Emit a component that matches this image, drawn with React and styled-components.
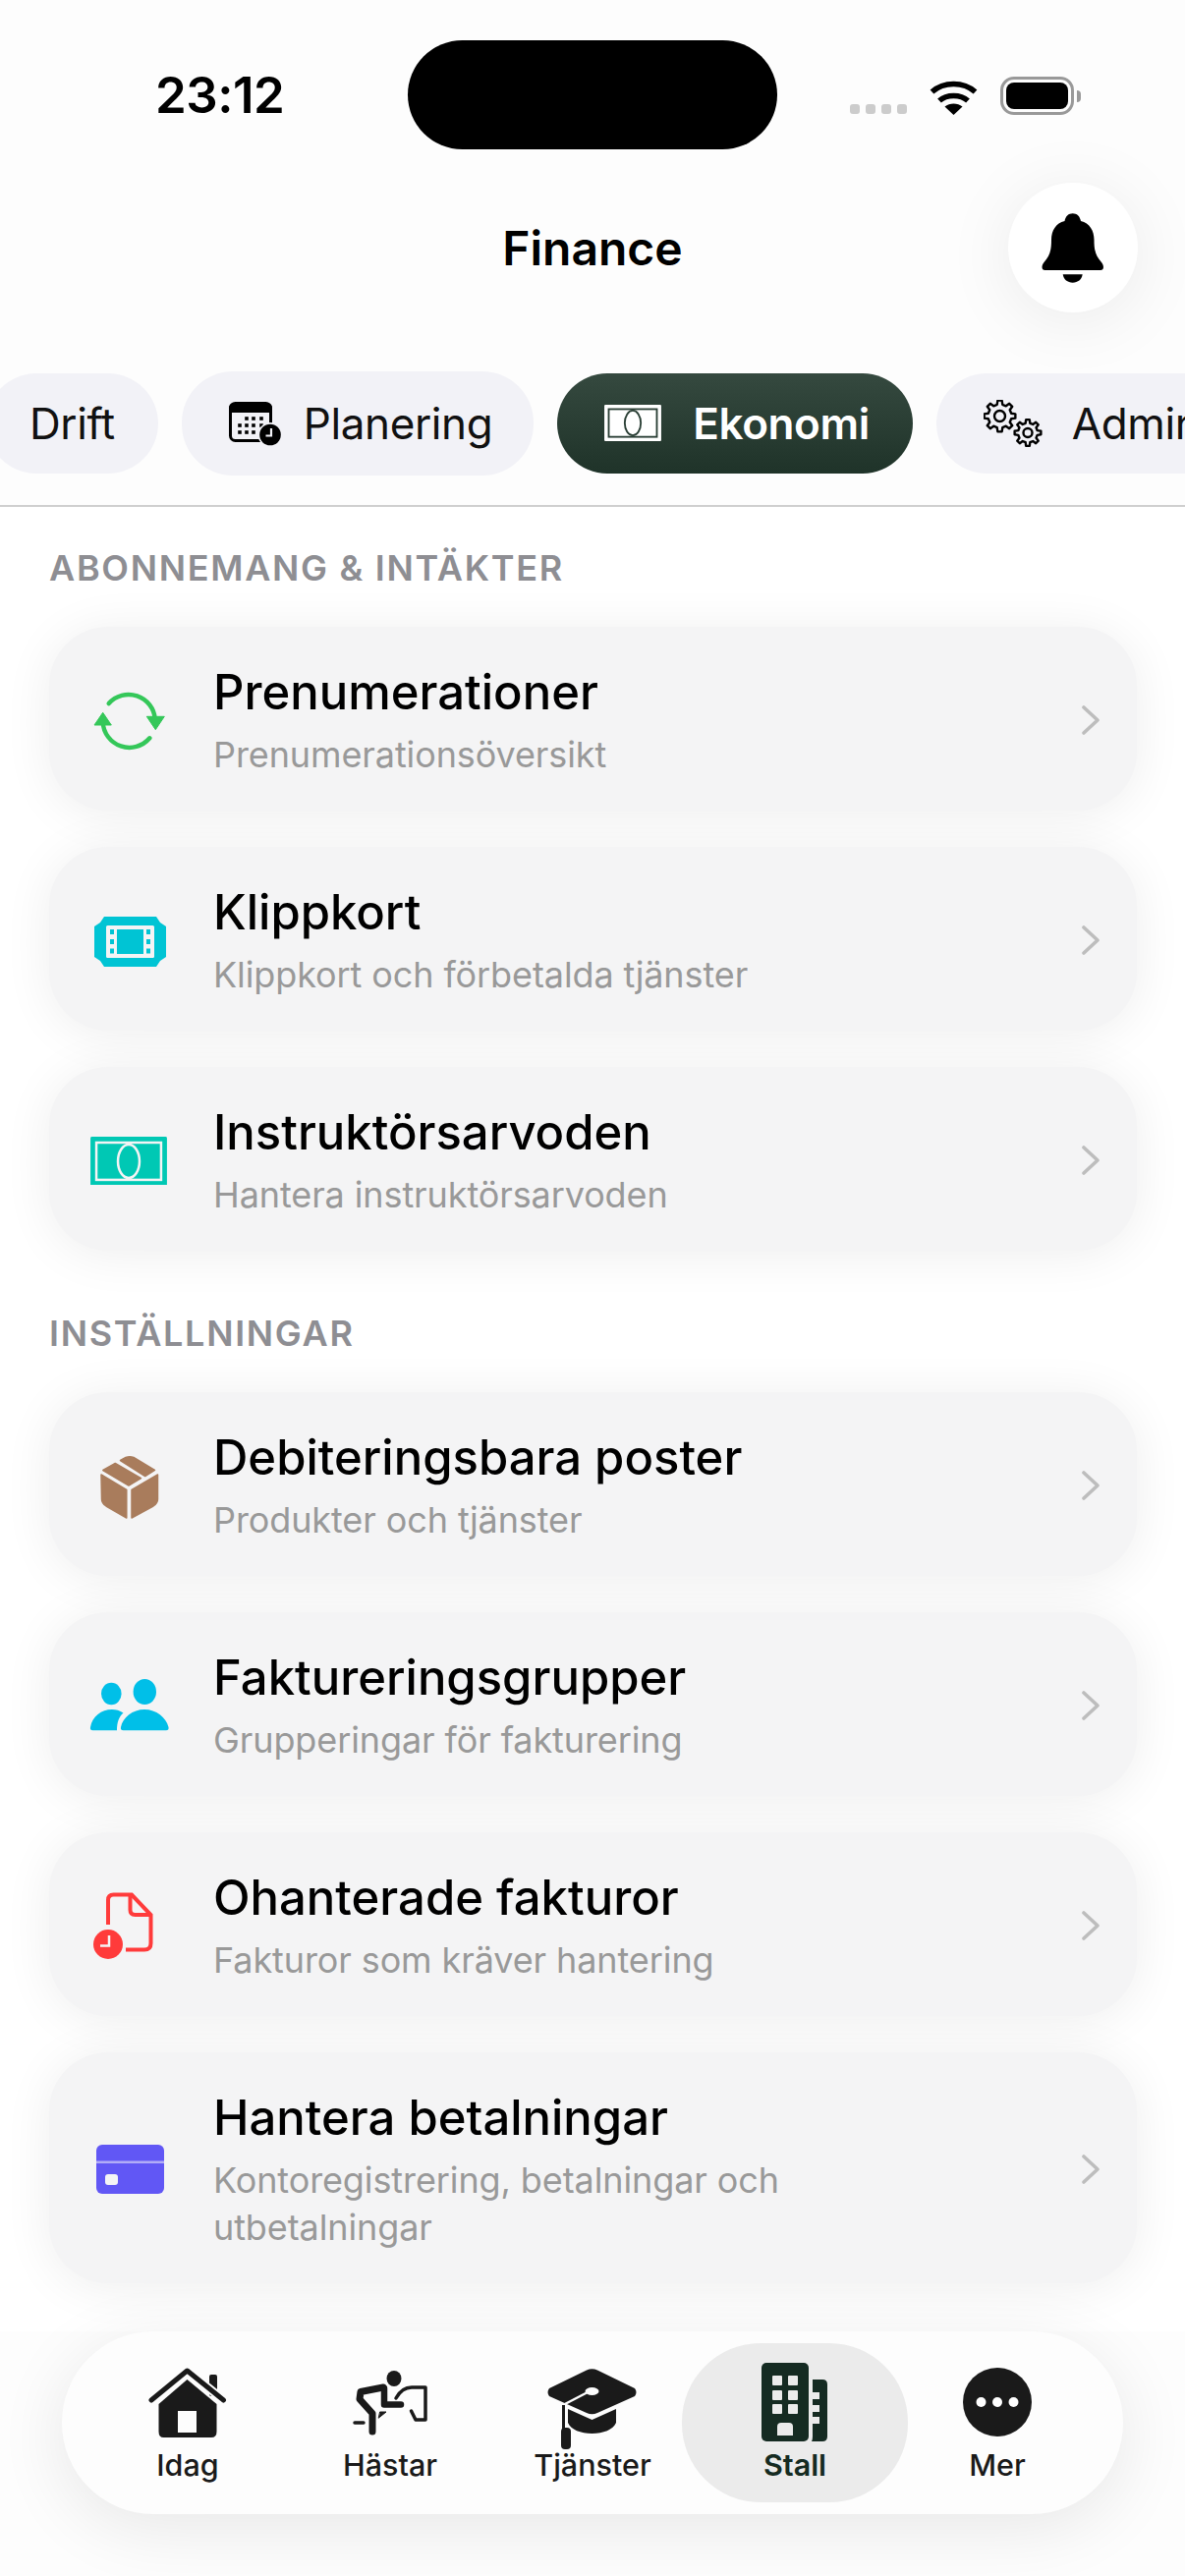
import styled, { createGlobalStyle } from 'styled-components'

const GlobalStyle = createGlobalStyle`
  html, body {
    margin: 0;
    padding: 0;
    background: #fff;
    font-family: Inter, "Noto Sans", sans-serif;
  }
`

const sections = [
  {
    title: 'ABONNEMANG & INTÄKTER',
    rows: [
      { title: 'Prenumerationer', sub: 'Prenumerationsöversikt', icon: <SyncIcon /> },
      { title: 'Klippkort', sub: 'Klippkort och förbetalda tjänster', icon: <TicketIcon /> },
      { title: 'Instruktörsarvoden', sub: 'Hantera instruktörsarvoden', icon: <MoneyIcon fill="#00c8b4" line="#f4f4f5" width={78} /> },
    ],
  },
  {
    title: 'INSTÄLLNINGAR',
    rows: [
      { title: 'Debiteringsbara poster', sub: 'Produkter och tjänster', icon: <BoxIcon /> },
      { title: 'Faktureringsgrupper', sub: 'Grupperingar för fakturering', icon: <PeopleIcon /> },
      { title: 'Ohanterade fakturor', sub: 'Fakturor som kräver hantering', icon: <DocClockIcon /> },
      { title: 'Hantera betalningar', sub: 'Kontoregistrering, betalningar och utbetalningar', icon: <CardIcon /> },
    ],
  },
]

const navItems = [
  { label: 'Idag', icon: <HomeIcon /> },
  { label: 'Hästar', icon: <RiderIcon /> },
  { label: 'Tjänster', icon: <CapIcon /> },
  { label: 'Stall', icon: <BuildingIcon />, active: true },
  { label: 'Mer', icon: <MoreIcon /> },
]

export default function App() {
  return (
    <Page>
      <GlobalStyle />

      <StatusBar>
        <Time>23:12</Time>
        <Island />
        <StatusIcons>
          <SignalDots>
            <i /><i /><i /><i />
          </SignalDots>
          <WifiIcon />
          <Battery><BatteryFill /></Battery>
          <BatteryNub />
        </StatusIcons>
      </StatusBar>

      <TitleRow>
        <Title>Finance</Title>
        <BellButton><BellIcon /></BellButton>
      </TitleRow>

      <Tabs>
        <Tab $plain>Drift</Tab>
        <Tab $tall $gap={23}><CalendarIcon />Planering</Tab>
        <Tab $active $gap={32}><MoneyIcon fill="#fff" line="#2a3f35" width={58} />Ekonomi</Tab>
        <Tab $gap={30}><GearsIcon />Administration</Tab>
      </Tabs>

      <Content>
        {sections.map(section => (
          <section key={section.title}>
            <SectionTitle>{section.title}</SectionTitle>
            <CardList>
              {section.rows.map(row => (
                <Card key={row.title}>
                  <CardIconSlot>{row.icon}</CardIconSlot>
                  <CardText>
                    <CardTitle>{row.title}</CardTitle>
                    <CardSub>{row.sub}</CardSub>
                  </CardText>
                  <Chevron />
                </Card>
              ))}
            </CardList>
          </section>
        ))}
      </Content>

      <Nav>
        {navItems.map(item => (
          <NavItem key={item.label} $active={item.active}>
            <NavIconSlot>{item.icon}</NavIconSlot>
            <NavLabel $active={item.active}>{item.label}</NavLabel>
          </NavItem>
        ))}
      </Nav>
    </Page>
  )
}

function WifiIcon() {
  return (
    <svg width="51" height="38" viewBox="0 0 51 38" fill="none" stroke="#000" strokeWidth="5.6">
      <path d="M3.5 14.5C15.5 3.8 35.5 3.8 47.5 14.5" />
      <path d="M11 23.5C18.5 16.8 32.5 16.8 40 23.5" />
      <path d="M25.5 38L16.5 29.5C21.5 25.5 29.5 25.5 34.5 29.5Z" fill="#000" stroke="none" />
    </svg>
  )
}

function BellIcon() {
  return (
    <svg width="64" height="71" viewBox="0 0 64 71" fill="#000">
      <path d="M31.7.3C36 .3 39 3 40 8 49 10 53.5 18 53.5 27 53.5 38 55 43 61 50 64 54 63.5 58 60 58H3.5C0 58-.5 54 2.5 50 8.5 43 10 38 10 27 10 18 14.5 10 23.5 8 24.5 3 27.5.3 31.7.3Z" />
      <path d="M21.7 62.3H41.7C41 67.5 37 70.7 31.7 70.7 26.4 70.7 22.4 67.5 21.7 62.3Z" />
    </svg>
  )
}

function CalendarIcon() {
  const dots = [[18, 17], [25, 17], [33, 17], [11, 24], [18, 24], [25, 24], [33, 24], [11, 31], [18, 31], [25, 31]]
  return (
    <svg width="53" height="45" viewBox="0 0 53 45">
      <rect x="1.5" y="1.5" width="41" height="38" rx="5" fill="#f2f2f7" stroke="#000" strokeWidth="3" />
      <path d="M0 6a5 5 0 0 1 5-5h34a5 5 0 0 1 5 5v5H0Z" fill="#000" />
      {dots.map(([x, y]) => <rect key={`${x}-${y}`} x={x - 1.8} y={y - 1.8} width="3.6" height="3.6" fill="#000" />)}
      <circle cx="42" cy="33.5" r="12.5" fill="#f2f2f7" />
      <circle cx="42" cy="33.5" r="10.8" fill="#000" />
      <path d="M43 27v7.5h-5.5" fill="none" stroke="#f2f2f7" strokeWidth="2.2" />
    </svg>
  )
}

function MoneyIcon({ fill, line, width }) {
  return (
    <svg width={width} height={width * 0.64} viewBox="0 0 78 50">
      <rect x="0" y="0" width="78" height="50" rx="1.5" fill={fill} />
      <rect x="6" y="6" width="66" height="38" fill="none" stroke={line} strokeWidth="2.5" />
      <ellipse cx="39" cy="25" rx="11" ry="17" fill="none" stroke={line} strokeWidth="2.5" />
    </svg>
  )
}

function gearPath(cx, cy, inner, outer, teeth) {
  const pts = []
  for (let i = 0; i < teeth; i++) {
    const step = (Math.PI * 2) / teeth
    const a = i * step
    const offs = [[-0.3, inner], [-0.17, outer], [0.17, outer], [0.3, inner]]
    offs.forEach(([k, r]) => {
      pts.push(`${(cx + Math.cos(a + k * step) * r).toFixed(2)} ${(cy + Math.sin(a + k * step) * r).toFixed(2)}`)
    })
  }
  return `M${pts.join('L')}Z`
}

function GearsIcon() {
  return (
    <svg width="60" height="48" viewBox="0 0 60 48" fill="none" stroke="#000" strokeWidth="2.4" strokeLinejoin="round">
      <path d={gearPath(16.5, 16.5, 12, 16, 8)} />
      <circle cx="16.5" cy="16.5" r="5.5" />
      <path d={gearPath(45, 33.5, 10, 13.5, 8)} />
      <circle cx="45" cy="33.5" r="4.5" />
    </svg>
  )
}

function SyncIcon() {
  return (
    <svg width="90" height="90" viewBox="0 0 90 90" fill="#34c759">
      <path d="M24.7 27A27 27 0 0 1 71.8 43" fill="none" stroke="#34c759" strokeWidth="4.5" strokeLinecap="round" />
      <path d="M66.3 62.3A27 27 0 0 1 18.7 46" fill="none" stroke="#34c759" strokeWidth="4.5" strokeLinecap="round" />
      <path d="M63.3 40.3H81.3L72.3 53.7Z" stroke="#34c759" strokeWidth="1" strokeLinejoin="round" />
      <path d="M10 49H27.3L18.7 36.3Z" stroke="#34c759" strokeWidth="1" strokeLinejoin="round" />
    </svg>
  )
}

function TicketIcon() {
  const holes = [33, 43, 52.5]
  return (
    <svg width="90" height="90" viewBox="0 0 90 90">
      <path d="M20 20H73L77 26 83 30V61L77 65 73 71H20L16 65 10 61V30L16 26Z" fill="#00c4d4" />
      <rect x="22" y="29" width="49" height="33" rx="1.5" fill="#f4f4f5" />
      <rect x="33" y="33" width="27" height="25" fill="#00c4d4" />
      {holes.map(y => <rect key={y} x="26" y={y} width="4" height="5" fill="#00c4d4" />)}
      {holes.map(y => <rect key={y} x="63" y={y} width="4" height="5" fill="#00c4d4" />)}
    </svg>
  )
}

function BoxIcon() {
  return (
    <svg width="90" height="90" viewBox="0 0 90 90" fill="#a97c5c" stroke="#a97c5c" strokeWidth="1.5" strokeLinejoin="round">
      <path d="M17 33L42.8 48.5V77L22 65Q17.5 62 17.5 58Z" />
      <path d="M48 48.5L74.5 33V58Q74.5 62 70 65L48 77Z" />
      <path d="M18.8 28.5L31.3 21.5 57.5 36.7 45 44Z" />
      <path d="M36.5 18.5L42 15.5Q46 13.8 50 15.5L71.5 28.3 61.7 34.5Z" />
    </svg>
  )
}

function PeopleIcon() {
  return (
    <svg width="90" height="90" viewBox="0 0 90 90" fill="#00bfe8">
      <ellipse cx="27.3" cy="32" rx="10.3" ry="11.3" />
      <ellipse cx="61.3" cy="30" rx="11.7" ry="13" />
      <path d="M8.5 69.3C6.5 69.3 5.5 68 6 66 8 55 17 48 28 48 32 48 36 49 39.5 51.5 35 55.5 33 61 33 69.3Z" />
      <path d="M39.5 69.3C37.5 69.3 36.5 68 37 66 39 56 49 48 61 48 73 48 83 56 85.5 66 86 68 85 69.3 83 69.3Z" />
    </svg>
  )
}

function DocClockIcon() {
  return (
    <svg width="90" height="90" viewBox="0 0 90 90">
      <path d="M24 43V18Q24 12.5 29.5 12.5H48L67.5 33V62Q67.5 68.5 61 68.5H42" fill="none" stroke="#ff3b3b" strokeWidth="4" />
      <path d="M46.5 12.5V28Q46.5 33 51.5 33H67.5" fill="none" stroke="#ff3b3b" strokeWidth="4" />
      <circle cx="24" cy="63" r="15" fill="#ff3b3b" />
      <path d="M25 54V64.5H16" fill="none" stroke="#f4f4f5" strokeWidth="2.5" />
    </svg>
  )
}

function CardIcon() {
  return (
    <svg width="90" height="90" viewBox="0 0 90 90">
      <rect x="12" y="19" width="69" height="50" rx="6" fill="#6157f5" />
      <rect x="12" y="35.5" width="69" height="2.5" fill="#b1acf7" />
      <rect x="21" y="49" width="13" height="11" rx="3" fill="#f4f4f5" />
    </svg>
  )
}

function HomeIcon() {
  return (
    <svg width="80" height="90" viewBox="0 -5 80 90" fill="#1a1a1a">
      <rect x="62" y="7" width="8" height="22" rx="2" />
      <path d="M10.5 37L39.5 12 69.5 37V65Q69.5 71 64 71H15.5Q10.5 71 10.5 65Z" />
      <path d="M3 33L39.5 3 76.5 33" fill="none" stroke="#fdfdfd" strokeWidth="9" strokeLinecap="round" strokeLinejoin="round" />
      <path d="M3 33L39.5 3 76.5 33" fill="none" stroke="#1a1a1a" strokeWidth="5" strokeLinecap="round" strokeLinejoin="round" />
      <rect x="30" y="44" width="19" height="22" fill="#fdfdfd" />
    </svg>
  )
}

function RiderIcon() {
  return (
    <svg width="80" height="90" viewBox="0 -5 80 90" fill="none" stroke="#1a1a1a" strokeLinecap="round" strokeLinejoin="round">
      <ellipse cx="44" cy="11" rx="7.5" ry="8" fill="#1a1a1a" stroke="none" />
      <path d="M33 20L10 24.5 9 32 22 46.5V65" strokeWidth="7" />
      <path d="M34 21V37.5H51" strokeWidth="6.5" />
      <path d="M46 31Q52 20 62 20H76V53H66L61.5 44" strokeWidth="3.5" />
      <path d="M4 56H13" strokeWidth="3.5" />
      <path d="M28.5 51L36 45H30Z" fill="#1a1a1a" strokeWidth="1" />
    </svg>
  )
}

function CapIcon() {
  return (
    <svg width="94" height="90" viewBox="0 -5 94 90" fill="#1a1a1a">
      <path d="M22 42L46.5 53 71 42V56C68 63 58 67 46.5 67 35 67 25 63 22 56Z" />
      <path d="M3 21L41 2.5Q46.5 0 52 2.5L90 21Q93 25 90 29L52 46Q46.5 48.5 41 46L3 29Q0 25 3 21Z" />
      <ellipse cx="46.5" cy="24" rx="7" ry="4" fill="#fdfdfd" />
      <path d="M42 25L17 38" stroke="#fdfdfd" strokeWidth="2.5" />
      <path d="M17.5 38V62" stroke="#1a1a1a" strokeWidth="3" />
      <rect x="15" y="61" width="10" height="22" rx="4" />
    </svg>
  )
}

function BuildingIcon() {
  const cols = [11, 27]
  const rows = [13, 28, 42]
  return (
    <svg width="68" height="90" viewBox="0 0 68 90" fill="#152b22">
      <rect x="0" y="0" width="48" height="80" rx="5" />
      <path d="M52 17H62Q67 17 67 22V75Q67 80 62 80H51Q52 78 52 75Z" />
      {cols.map(x => rows.map(y => <rect key={`${x}-${y}`} x={x} y={y} width="10" height="10" rx="1" fill="#ebebeb" />))}
      <path d="M16 74V65Q16 61 20 61H28Q32 61 32 65V74Z" fill="#ebebeb" />
      {[30, 43, 55].map(y => <rect key={y} x="52" y={y} width="7" height="7" fill="#ebebeb" />)}
    </svg>
  )
}

function MoreIcon() {
  return (
    <svg width="70" height="90" viewBox="0 -5 70 90">
      <circle cx="35" cy="35" r="35" fill="#1a1a1a" />
      <circle cx="18.5" cy="35" r="5" fill="#fff" />
      <circle cx="35" cy="35" r="5" fill="#fff" />
      <circle cx="51.5" cy="35" r="5" fill="#fff" />
    </svg>
  )
}

function Chevron() {
  return (
    <ChevronSvg width="18" height="30" viewBox="0 0 18 30" fill="none" stroke="#bdbdbd" strokeWidth="3.6" strokeLinecap="round" strokeLinejoin="round">
      <path d="M2 2L16 15 2 28" />
    </ChevronSvg>
  )
}

const Page = styled.div`
  width: 1206px;
  height: 2622px;
  overflow: hidden;
  background: #fdfdfd;
  display: flex;
  flex-direction: column;
`

const StatusBar = styled.div`
  height: 186px;
  box-sizing: border-box;
  padding: 41px 0 0 158px;
  display: flex;
  align-items: flex-start;
`

const Time = styled.div`
  width: 257px;
  height: 111px;
  display: flex;
  align-items: center;
  font-size: 51px;
  font-weight: 600;
  letter-spacing: -0.5px;
  color: #000;
`

const Island = styled.div`
  width: 376px;
  height: 111px;
  border-radius: 56px;
  background: #000;
`

const StatusIcons = styled.div`
  height: 39px;
  margin: 37px 0 0 74px;
  display: flex;
  align-items: center;
  gap: 22px;
`

const SignalDots = styled.div`
  align-self: flex-end;
  margin-bottom: 1px;
  display: flex;
  gap: 6px;

  i {
    width: 10px;
    height: 10px;
    border-radius: 3px;
    background: #cccccc;
  }
`

const Battery = styled.div`
  width: 75px;
  height: 39px;
  box-sizing: border-box;
  padding: 3px;
  border: 3px solid #999;
  border-radius: 14px;
`

const BatteryFill = styled.div`
  height: 100%;
  border-radius: 8px;
  background: #000;
`

const BatteryNub = styled.div`
  width: 4px;
  height: 12px;
  margin-left: -19px;
  border-radius: 0 4px 4px 0;
  background: #999;
`

const TitleRow = styled.div`
  height: 132px;
  position: relative;
  display: flex;
  align-items: center;
  justify-content: center;
`

const Title = styled.h1`
  margin: 0;
  font-size: 48px;
  font-weight: 600;
  color: #000;
`

const BellButton = styled.div`
  position: absolute;
  right: 48px;
  top: 0;
  width: 132px;
  height: 132px;
  border-radius: 50%;
  background: #fff;
  box-shadow: 0 8px 70px rgba(0, 0, 0, 0.08);
  display: flex;
  align-items: center;
  justify-content: center;
`

const Tabs = styled.div`
  margin: 60px 0 0 -14px;
  height: 106px;
  padding-bottom: 30px;
  border-bottom: 2px solid #cfcfcf;
  width: 1220px;
  display: flex;
  align-items: center;
  gap: 24px;
  overflow: hidden;
  flex-shrink: 0;
`

const Tab = styled.div`
  height: ${p => (p.$tall ? '106px' : '102px')};
  box-sizing: border-box;
  padding: 0 ${p => (p.$tall ? '42px' : '44px')} 0 ${p => (p.$plain ? '44px' : '48px')};
  flex-shrink: 0;
  display: flex;
  align-items: center;
  gap: ${p => p.$gap || 0}px;
  border-radius: 52px;
  background: ${p => (p.$active ? 'linear-gradient(180deg, #35493f 0%, #1f3329 100%)' : '#f2f2f7')};
  color: ${p => (p.$active ? '#fff' : '#111')};
  font-size: 44px;
  letter-spacing: -0.4px;
  font-weight: ${p => (p.$active ? 600 : 400)};
`

const Content = styled.div`
  height: 1857px;
  flex-shrink: 0;
  box-sizing: border-box;
  padding: 40px 49px 0 50px;
  background: #fff;

  section + section {
    margin-top: 62px;
  }
`

const SectionTitle = styled.h2`
  margin: 0 0 38px;
  font-size: 36px;
  line-height: 44px;
  font-weight: 600;
  letter-spacing: 1.7px;
  color: #8e8e93;
`

const CardList = styled.div`
  display: flex;
  flex-direction: column;
  gap: 37px;
`

const Card = styled.div`
  box-sizing: border-box;
  padding: 37px 38px 33px 36px;
  display: flex;
  align-items: center;
  border-radius: 60px;
  background: #f4f4f5;
  box-shadow: 0 4px 50px rgba(0, 0, 0, 0.07);
`

const CardIconSlot = styled.div`
  width: 90px;
  height: 90px;
  flex-shrink: 0;
  margin-right: 41px;
  display: flex;
  align-items: center;
  justify-content: center;
`

const CardText = styled.div`
  flex: 1;
  min-width: 0;
  max-width: 640px;
`

const CardTitle = styled.div`
  font-size: 49px;
  line-height: 60px;
  font-weight: 500;
  color: #000;
  margin-bottom: 9px;
`

const CardSub = styled.div`
  font-size: 36px;
  line-height: 48px;
  letter-spacing: -0.1px;
  color: #999999;
`

const ChevronSvg = styled.svg`
  margin: -2px 0 0 auto;
  flex-shrink: 0;
`

const Nav = styled.div`
  margin: 0 63px;
  height: 186px;
  box-sizing: border-box;
  padding: 0 25px;
  display: grid;
  grid-template-columns: repeat(5, 1fr);
  align-items: center;
  border-radius: 93px;
  background: #fdfdfd;
  box-shadow: 0 14px 70px rgba(0, 0, 0, 0.09);
`

const NavItem = styled.div`
  height: 162px;
  box-sizing: border-box;
  padding-top: 20px;
  margin: 0 -12px;
  display: flex;
  flex-direction: column;
  align-items: center;
  border-radius: 80px;
  background: ${p => (p.$active ? '#ebebeb' : 'transparent')};
`

const NavIconSlot = styled.div`
  height: 90px;
  display: flex;
  justify-content: center;
`

const NavLabel = styled.div`
  font-size: 30.5px;
  line-height: 28px;
  font-weight: ${p => (p.$active ? 600 : 500)};
  color: ${p => (p.$active ? '#152b22' : '#1a1a1a')};
`
